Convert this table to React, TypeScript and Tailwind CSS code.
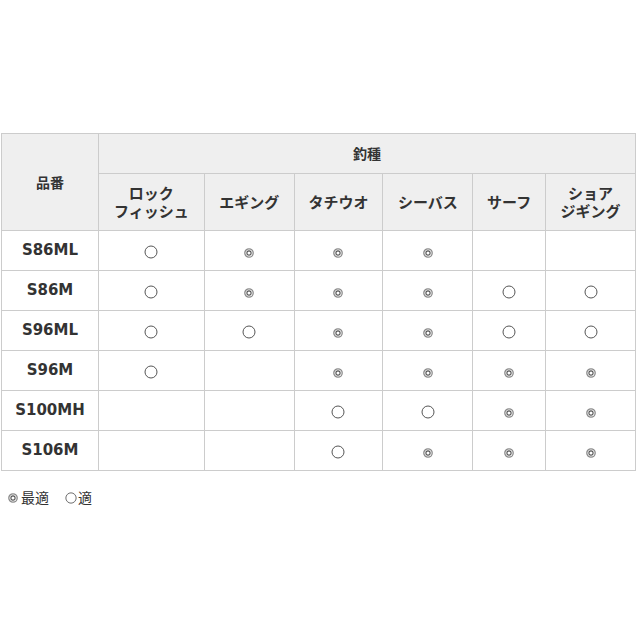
const COLS = ['ロック\nフィッシュ', 'エギング', 'タチウオ', 'シーバス', 'サーフ', 'ショア\nジギング'];
const COL_W = ['w-[106px]', 'w-[90px]', 'w-[89px]', 'w-[90px]', 'w-[73px]', 'w-[90px]'];

// 2 = ◎ 最適, 1 = ○ 適, 0 = なし
const ROWS: { name: string; v: number[] }[] = [
  { name: 'S86ML', v: [1, 2, 2, 2, 0, 0] },
  { name: 'S86M', v: [1, 2, 2, 2, 1, 1] },
  { name: 'S96ML', v: [1, 1, 2, 2, 1, 1] },
  { name: 'S96M', v: [1, 0, 2, 2, 2, 2] },
  { name: 'S100MH', v: [0, 0, 1, 1, 2, 2] },
  { name: 'S106M', v: [0, 0, 1, 2, 2, 2] },
];

const FONT = "font-['Noto_Sans_CJK_JP','Noto_Sans',sans-serif]";
const CELL = 'border border-[#cccccc] text-center align-middle';

function Double({ className = '' }: { className?: string }) {
  return (
    <svg width="10" height="10" viewBox="0 0 10 10" className={`inline-block ${className}`}>
      <circle cx="5" cy="5" r="4.2" fill="none" stroke="#8a8a8a" strokeWidth="1.3" />
      <circle cx="5" cy="5" r="2.1" fill="none" stroke="#555" strokeWidth="1.1" />
    </svg>
  );
}

function Single({ className = '' }: { className?: string }) {
  return (
    <svg width="14" height="14" viewBox="0 0 14 14" className={`inline-block ${className}`}>
      <circle cx="7" cy="7" r="6" fill="none" stroke="#555" strokeWidth="1" />
    </svg>
  );
}

function Mark({ v }: { v: number }) {
  if (v === 2) return <Double className="align-middle" />;
  if (v === 1) return <Single className="align-middle" />;
  return null;
}

export default function App() {
  return (
    <div className={`w-[640px] h-[640px] bg-white pt-[133px] pl-[1px] ${FONT}`}>
      <table className="border-collapse w-[635px] text-[#333]">
        <thead>
          <tr className="h-[40px] bg-[#efefef]">
            <th rowSpan={2} className={`${CELL} w-[97px] text-[14px] font-bold`}>品番</th>
            <th colSpan={6} className={`${CELL} text-[14px] font-bold`}>釣種</th>
          </tr>
          <tr className="h-[57px] bg-[#efefef]">
            {COLS.map((c, i) => (
              <th key={i} className={`${CELL} ${COL_W[i]} text-[15px] font-bold leading-[18px] whitespace-pre-line`}>{c}</th>
            ))}
          </tr>
        </thead>
        <tbody>
          {ROWS.map(r => (
            <tr key={r.name} className="h-[40px]">
              <td className={`${CELL} text-[15px] font-bold font-['DejaVu_Sans',sans-serif]`}>{r.name}</td>
              {r.v.map((v, i) => (
                <td key={i} className={`${CELL} leading-none`}><Mark v={v} /></td>
              ))}
            </tr>
          ))}
        </tbody>
      </table>
      <p className="mt-[16px] ml-[7px] flex items-center text-[14px] text-[#333]">
        <Double className="mr-[3px]" />
        <span>最適</span>
        <Single className="ml-[16px] mr-[1px] w-[12px] h-[12px]" />
        <span>適</span>
      </p>
    </div>
  );
}
